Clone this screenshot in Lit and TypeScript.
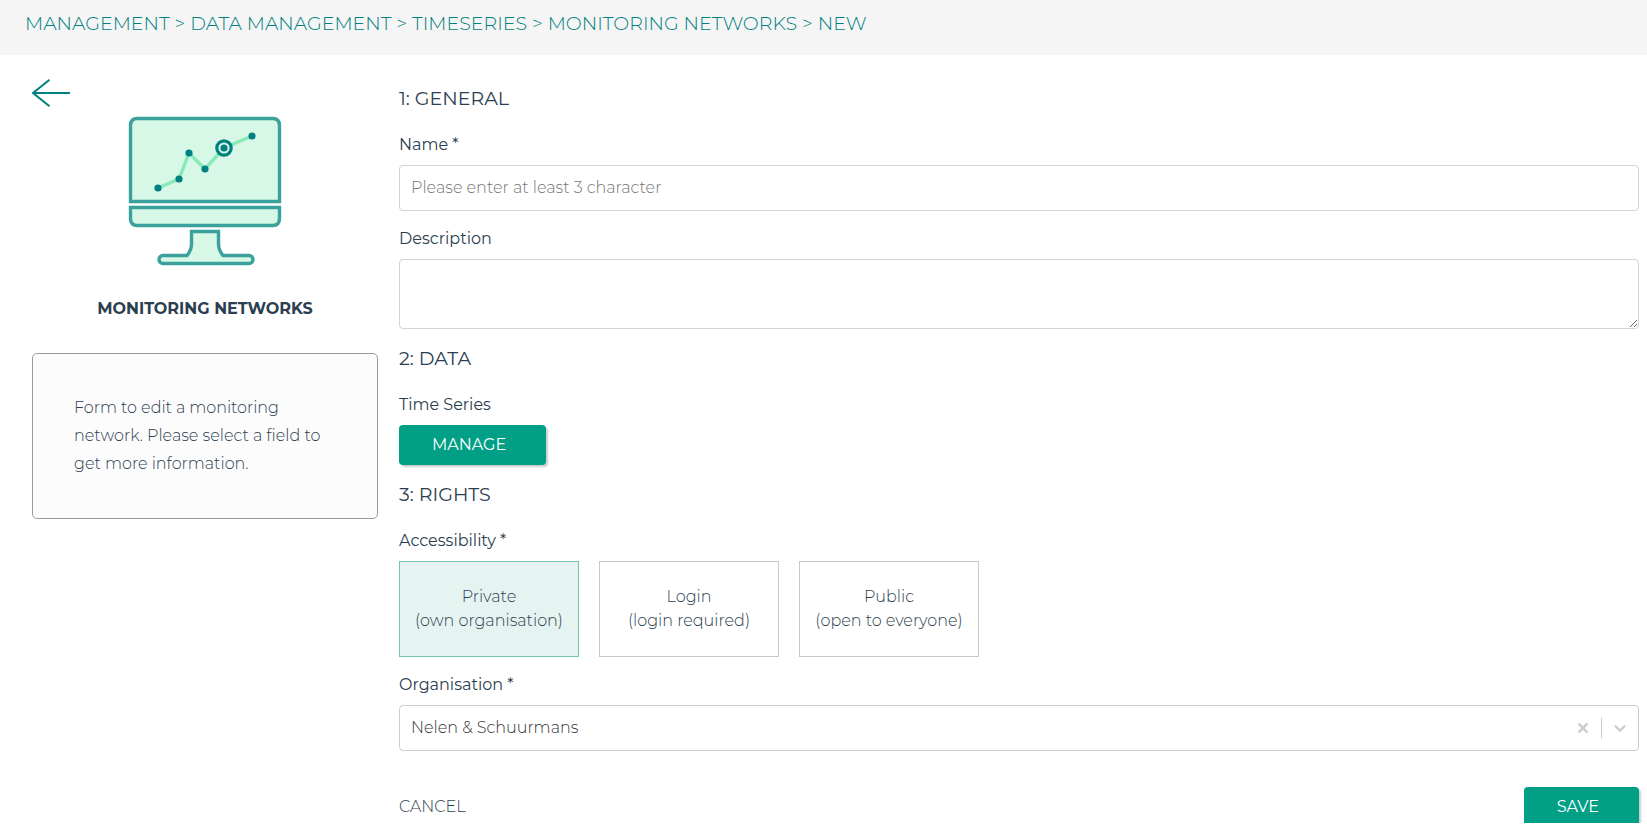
import { LitElement, html, css, svg } from "lit";
import { customElement, state } from "lit/decorators.js";

const crumbs = ["MANAGEMENT", "DATA MANAGEMENT", "TIMESERIES", "MONITORING NETWORKS", "NEW"];

const accessOptions = [
  { value: "private", title: "Private", note: "(own organisation)" },
  { value: "login", title: "Login", note: "(login required)" },
  { value: "public", title: "Public", note: "(open to everyone)" },
];

const points = [
  [158, 188],
  [179, 179],
  [189, 153],
  [205, 169],
  [224, 148],
  [252, 136],
];

@customElement("monitor-icon")
export class MonitorIcon extends LitElement {
  static styles = css`
    :host { display: block; width: 154px; height: 150px; }
    svg { display: block; width: 100%; height: 100%; }
    .case { fill: #d8f8e7; stroke: #3aa19c; stroke-width: 3.4; }
    .line { fill: none; stroke: #86ebb8; stroke-width: 3.4; }
    .dot { fill: #008080; }
    .ring { fill: #d8f8e7; stroke: #008080; stroke-width: 3.2; }
  `;

  render() {
    return html`
      <svg viewBox="128 116 154 150" aria-hidden="true">
        <path class="case" d="M130.5 201.5V125.5Q130.5 118.5 137.5 118.5H272.5Q279.5 118.5 279.5 125.5V201.5Z" />
        <path class="case" d="M130.5 207.5H279.5V218.5Q279.5 225.5 272.5 225.5H137.5Q130.5 225.5 130.5 218.5Z" />
        <path class="case" d="M191.5 231.5H218.5V244Q218.5 250 223 255.500H249A4 4 0 0 1 249 263.5H163A4 4 0 0 1 163 255.500H187Q191.5 250 191.5 244Z" />
        <polyline class="line" points=${points.map((p) => p.join(",")).join(" ")} />
        ${points.map(([x, y], i) =>
          i === 4
            ? svg`<circle class="ring" cx=${x} cy=${y} r="7.2" /><circle class="dot" cx=${x} cy=${y} r="3.6" />`
            : svg`<circle class="dot" cx=${x} cy=${y} r="3.6" />`
        )}
      </svg>
    `;
  }
}

@customElement("app-root")
export class AppRoot extends LitElement {
  @state() private access = "private";
  @state() private organisation = "nelen";

  static styles = css`
    :host {
      display: block;
      height: 100vh;
      box-sizing: border-box;
      padding-bottom: 10px;
      background: #fff;
      color: #2c3e50;
      font: 350 16px/24px Montserrat, Inter, sans-serif;
    }
    * { box-sizing: border-box; }
    button, input, textarea, select { font: inherit; color: inherit; }
    h1, h2, p { margin: 0; }
    .page { height: 100%; overflow: hidden; display: flex; flex-direction: column; }
    .crumbs {
      flex: none;
      padding: 12px 25px 19px;
      background: #f5f5f5;
      color: #008080;
      font-size: 19px;
    }
    .crumbs a { color: inherit; text-decoration: none; }
    .body {
      flex: 1;
      min-height: 0;
      display: grid;
      grid-template-columns: 346px minmax(0, 1fr);
      column-gap: 21px;
      align-items: start;
      padding: 24px 8px 0 32px;
    }
    .side { display: flex; flex-direction: column; }
    .back { align-self: flex-start; display: block; width: 38px; height: 28px; }
    .back svg { display: block; }
    .side monitor-icon { align-self: center; margin-top: 9px; }
    .side h1 { margin-top: 31px; text-align: center; font-size: 16px; font-weight: 700; line-height: 24px; }
    .help {
      margin-top: 32px;
      min-height: 166px;
      padding: 40px 41px;
      border: 1px solid #999;
      border-radius: 5px;
      background: #fcfcfc;
      line-height: 28px;
    }
    form { padding-top: 8px; display: flex; flex-direction: column; gap: 18px; }
    .group { display: flex; flex-direction: column; gap: 16px; }
    h2 { margin-bottom: 6px; font-size: 19px; font-weight: 400; line-height: 24px; }
    .field { display: flex; flex-direction: column; align-items: stretch; gap: 8px; min-width: 0; }
    .label { font-weight: 400; }
    .text { display: block; width: 100%; padding: 0 11px 2px; border: 1px solid #ced4da; border-radius: 4px; background: #fff; outline-color: #009f86; }
    input.text { height: 46px; }
    textarea.text { height: 70px; padding: 10px 11px; resize: vertical; }
    .text::placeholder { color: #757575; opacity: 1; }
    .action {
      align-self: flex-start;
      height: 40px;
      padding: 0 40px 0 33px;
      border: 0;
      border-radius: 4px;
      background: #009f86;
      box-shadow: 2px 2px 2px rgba(0, 0, 0, 0.2);
      color: #fff;
      font-weight: 400;
      cursor: pointer;
    }
    .choices { display: flex; gap: 20px; }
    .choice {
      width: 180px;
      height: 96px;
      display: flex;
      flex-direction: column;
      align-items: center;
      justify-content: center;
      border: 1px solid #c8c8c8;
      cursor: pointer;
    }
    .choice:has(input:checked) { border-color: #73c6b0; background: #e5f4f1; }
    .choice:has(input:focus-visible) { outline: 2px solid #009f86; }
    .choice input { position: absolute; opacity: 0; pointer-events: none; }
    .picker { height: 46px; display: flex; align-items: center; border: 1px solid #ccc; border-radius: 4px; }
    .picker select {
      flex: 1;
      min-width: 0;
      height: 44px;
      padding: 0 11px;
      border: 0;
      outline: 0;
      appearance: none;
      background: none;
      color: #333;
    }
    .clear { display: flex; padding: 8px; border: 0; background: none; cursor: pointer; }
    .rule { width: 1px; height: 20px; background: #ccc; }
    .chevron { padding: 8px; display: flex; }
    .footer { display: flex; justify-content: space-between; align-items: center; margin-top: 18px; }
    .cancel { padding: 0; border: 0; background: none; cursor: pointer; }
  `;

  render() {
    return html`
      <div class="page">
        <nav class="crumbs" aria-label="Breadcrumb">
          ${crumbs.map((c, i) => html`${i ? " > " : ""}<a href="#">${c}</a>`)}
        </nav>
        <main class="body">
          <aside class="side">
            <a class="back" href="#" aria-label="Back">
              <svg width="38" height="28" fill="none" stroke="#008080" stroke-width="2"><path d="M38 14H1M17.500 .8L1 14L17.500 27.200" /></svg>
            </a>
            <monitor-icon></monitor-icon>
            <h1>MONITORING NETWORKS</h1>
            <p class="help">Form to edit a monitoring network. Please select a field to get more information.</p>
          </aside>
          <form @submit=${(e: Event) => e.preventDefault()}>
            <section class="group">
              <h2>1: GENERAL</h2>
              <div class="field">
                <label class="label" for="name">Name *</label>
                <input class="text" id="name" type="text" placeholder="Please enter at least 3 character" />
              </div>
              <div class="field">
                <label class="label" for="description">Description</label>
                <textarea class="text" id="description"></textarea>
              </div>
            </section>
            <section class="group">
              <h2>2: DATA</h2>
              <div class="field">
                <label class="label" for="series">Time Series</label>
                <button class="action" id="series" type="button">MANAGE</button>
              </div>
            </section>
            <section class="group">
              <h2>3: RIGHTS</h2>
              <div class="field" role="radiogroup" aria-labelledby="access">
                <span class="label" id="access">Accessibility *</span>
                <div class="choices">
                  ${accessOptions.map(
                    (o) => html`<label class="choice">
                      <input type="radio" name="access" .checked=${this.access === o.value} @change=${() => (this.access = o.value)} />
                      <span>${o.title}</span><span>${o.note}</span>
                    </label>`
                  )}
                </div>
              </div>
              <div class="field">
                <label class="label" for="organisation">Organisation *</label>
                <div class="picker">
                  <select id="organisation" @change=${(e: Event) => (this.organisation = (e.target as HTMLSelectElement).value)}>
                    <option value="nelen" ?selected=${this.organisation === "nelen"}>Nelen &amp; Schuurmans</option>
                  </select>
                  <button class="clear" type="button" aria-label="Clear organisation">
                    <svg width="20" height="20" fill="none" stroke="#ccc" stroke-width="2.6" stroke-linecap="round"><path d="M6.200 6.200L13.800 13.800M13.800 6.200L6.200 13.800" /></svg>
                  </button>
                  <span class="rule"></span>
                  <span class="chevron"><svg width="20" height="20" fill="none" stroke="#ccc" stroke-width="2.3" stroke-linecap="round"><path d="M5.500 8.200L10 12.600L14.500 8.200" /></svg></span>
                </div>
              </div>
            </section>
            <div class="footer">
              <button class="cancel" type="button">CANCEL</button>
              <button class="action" type="submit">SAVE</button>
            </div>
          </form>
        </main>
      </div>
    `;
  }
}
